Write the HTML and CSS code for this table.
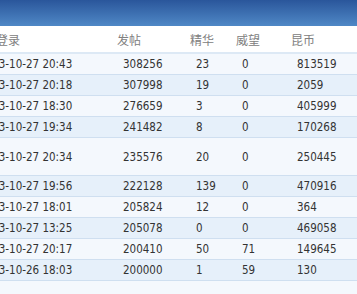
FILE: index.html
```html
<!DOCTYPE html>
<html>
<head>
<meta charset="utf-8">
<link rel="stylesheet" href="styles.css">
</head>
<body>
<div class="bar"></div>
<div class="table">
  <div class="row head">
    <div class="c date">最后登录</div>
    <div class="c">发帖</div>
    <div class="c">精华</div>
    <div class="c">威望</div>
    <div class="c">昆币</div>
  </div>
  <div class="row odd"><div class="c date">2013-10-27 20:43</div><div class="c">308256</div><div class="c">23</div><div class="c">0</div><div class="c">813519</div></div>
  <div class="row even"><div class="c date">2013-10-27 20:18</div><div class="c">307998</div><div class="c">19</div><div class="c">0</div><div class="c">2059</div></div>
  <div class="row odd"><div class="c date">2013-10-27 18:30</div><div class="c">276659</div><div class="c">3</div><div class="c">0</div><div class="c">405999</div></div>
  <div class="row even"><div class="c date">2013-10-27 19:34</div><div class="c">241482</div><div class="c">8</div><div class="c">0</div><div class="c">170268</div></div>
  <div class="row odd tall"><div class="c date">2013-10-27 20:34</div><div class="c">235576</div><div class="c">20</div><div class="c">0</div><div class="c">250445</div></div>
  <div class="row even"><div class="c date">2013-10-27 19:56</div><div class="c">222128</div><div class="c">139</div><div class="c">0</div><div class="c">470916</div></div>
  <div class="row odd"><div class="c date">2013-10-27 18:01</div><div class="c">205824</div><div class="c">12</div><div class="c">0</div><div class="c">364</div></div>
  <div class="row even"><div class="c date">2013-10-27 13:25</div><div class="c">205078</div><div class="c">0</div><div class="c">0</div><div class="c">469058</div></div>
  <div class="row odd"><div class="c date">2013-10-27 20:17</div><div class="c">200410</div><div class="c">50</div><div class="c">71</div><div class="c">149645</div></div>
  <div class="row even"><div class="c date">2013-10-26 18:03</div><div class="c">200000</div><div class="c">1</div><div class="c">59</div><div class="c">130</div></div>
</div>
</body>
</html>
```
FILE: styles.css
```css
html, body {
  margin: 0;
  padding: 0;
  background: #f4f8fd;
  overflow: hidden;
}
body {
  width: 357px;
  height: 294px;
  font-family: "DejaVu Sans Condensed", "DejaVu Sans", "Noto Sans CJK SC", sans-serif;
  font-size: 11.5px;
  color: #333;
}
.bar {
  height: 26px;
  background: linear-gradient(#2a569b, #4f88c6);
}
.table {
  margin-left: -31px;
}
.row {
  display: grid;
  grid-template-columns: 148px 73px 46px 55px 120px;
  height: 21px;
  align-items: center;
  border-bottom: 1px solid #cfdff0;
  box-sizing: border-box;
}
.row .c {
  padding-left: 6px;
  white-space: nowrap;
}
.row .date {
  padding-left: 10px;
}
.head {
  height: 28px;
  background: #fff;
  color: #808080;
  font-family: "Noto Sans CJK SC", sans-serif;
  font-size: 12px;
  border-bottom: 2px solid #dde9f5;
}
.head .c {
  padding-left: 0;
}
.head .date {
  padding-left: 3px;
}
.odd { background: #f4f8fd; }
.even { background: #e6f0fa; }
.tall { height: 38px; }
```
